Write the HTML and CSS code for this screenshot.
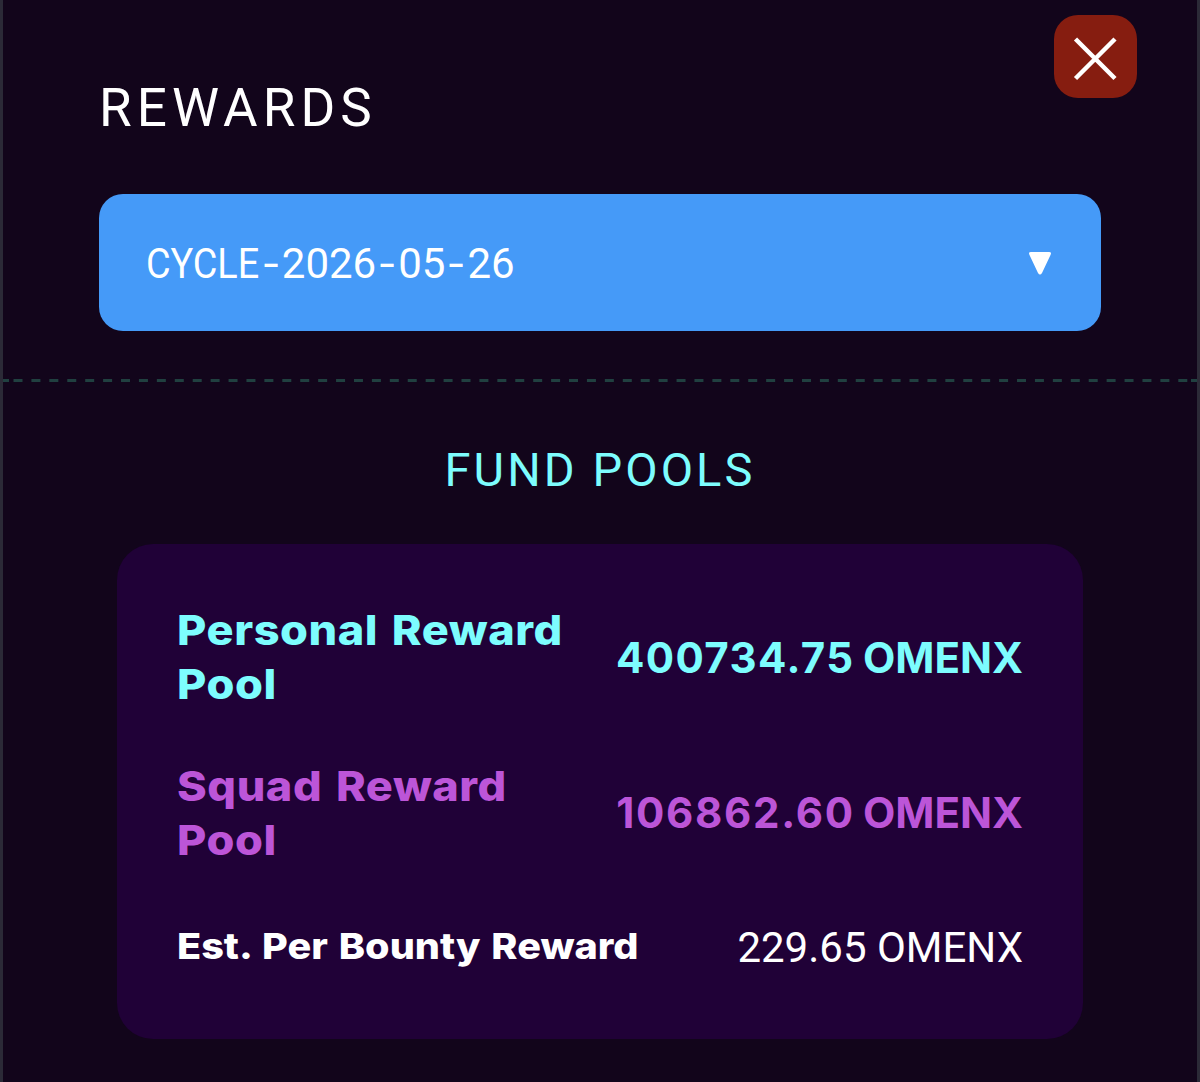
FILE: index.html
```
<!DOCTYPE html>
<html lang="en">
<head>
    <meta charset="UTF-8">
    <meta name="viewport" content="width=device-width, initial-scale=1.0">
    <title>Rewards</title>
    <link rel="stylesheet" href="styles.css">
</head>
<body>
    <div class="panel">
        <button class="close-btn" aria-label="Close">
            <svg width="83" height="83" viewBox="0 0 83 83">
                <path d="M21.500 24 L61 63.500 M61 24 L21.500 63.500" stroke="#fff" stroke-width="4.500" fill="none"/>
            </svg>
        </button>
        <div class="panel-header">
            <h1>REWARDS</h1>
            <div class="cycle-select">
                <span class="cycle-name"><span class="cycle-word">CYCLE</span><span class="dash">-</span>2026<span class="dash">-</span>05<span class="dash">-</span>26</span>
                <svg class="arrow" width="24" height="24" viewBox="0 0 24 24">
                    <path d="M3 1 H21 Q24 1 22.500 4 L14 22 Q12 25 10 22 L1.500 4 Q0 1 3 1 Z" fill="#fff"/>
                </svg>
            </div>
        </div>
        <svg class="divider" width="1194" height="3" viewBox="0 0 1194 3">
            <path d="M0 1.500 H6 M1188 1.500 H1194" stroke="#204040" stroke-width="3"/>
            <path d="M10.500 1.500 H1185" stroke="#204040" stroke-width="3" stroke-dasharray="9 8.920"/>
        </svg>
        <div class="panel-body">
            <h2>FUND POOLS</h2>
            <div class="pools">
                <div class="pool-row personal">
                    <div class="pool-label">Personal Reward<br>Pool</div>
                    <div class="pool-value"><span class="amount">400734.75</span> OMENX</div>
                </div>
                <div class="pool-row squad">
                    <div class="pool-label">Squad Reward<br>Pool</div>
                    <div class="pool-value"><span class="amount">106862.60</span> OMENX</div>
                </div>
                <div class="pool-row bounty">
                    <div class="pool-label">Est. Per Bounty Reward</div>
                    <div class="pool-value">229.65 OMENX</div>
                </div>
            </div>
        </div>
    </div>
</body>
</html>
```
FILE: styles.css
```
* {
    box-sizing: border-box;
}

body {
    margin: 0;
    background-color: #12051b;
    color: white;
    font-family: "Roboto", sans-serif;
}

.panel {
    position: relative;
    height: 1082px;
    border-left: 3px solid #2b2a37;
    border-right: 3px solid #2b2a37;
    overflow: hidden;
}

.close-btn {
    position: absolute;
    top: 15px;
    right: 60px;
    width: 83px;
    height: 83px;
    padding: 0;
    border: none;
    border-radius: 24px;
    background-color: #861d10;
}

.close-btn svg {
    display: block;
}

.panel-header {
    height: 379px;
    padding: 72px 96px 0;
}

h1, h2 {
    margin: 0;
    font-weight: 400;
}

h1 {
    height: 122px;
    font-size: 53px;
    line-height: 72px;
    letter-spacing: 5.1px;
}

.cycle-select {
    display: flex;
    justify-content: space-between;
    align-items: center;
    height: 137px;
    padding: 0 49px 0 47px;
    border-radius: 24px;
    background-color: #459af8;
    font-size: 42px;
}

.cycle-name {
    padding-top: 2px;
}

.cycle-word {
    display: inline-block;
    margin-right: -12px;
    transform: scaleX(0.9);
    transform-origin: left;
}

.dash {
    display: inline-block;
    width: 22px;
    text-align: center;
    transform: scaleX(1.3);
}

.divider {
    display: block;
}

.panel-body {
    padding: 53px 114px 0;
}

h2 {
    height: 109px;
    color: #7dfdfe;
    font-size: 47px;
    line-height: 70px;
    letter-spacing: 3.1px;
    text-align: center;
}

.pools {
    height: 495px;
    padding: 59px 60px;
    border-radius: 36px;
    background-color: #200137;
}

.pool-row {
    display: flex;
    justify-content: space-between;
    align-items: center;
    height: 108px;
    margin-bottom: 47px;
    white-space: nowrap;
}

.pool-label {
    font-family: "Inter", sans-serif;
    font-size: 41px;
    font-weight: 800;
    line-height: 54px;
    letter-spacing: 0.5px;
    word-spacing: 3px;
    transform: scaleX(1.1);
    transform-origin: left;
}

.pool-value {
    font-family: "Inter", sans-serif;
    font-size: 42px;
    font-weight: 700;
}

.amount {
    margin-right: -1.4px;
    letter-spacing: 1.4px;
}

.personal {
    margin-bottom: 48px;
    color: #7dfdfe;
}

.squad {
    margin-bottom: 46px;
    color: #bc55d8;
}

.squad .pool-value {
    padding-bottom: 2px;
}

.squad .amount {
    margin-right: -1.7px;
    letter-spacing: 1.7px;
}

.bounty {
    height: 67px;
}

.bounty .pool-label {
    padding-bottom: 1px;
    font-size: 36px;
    letter-spacing: 0;
    word-spacing: 2px;
}

.bounty .pool-value {
    padding-top: 1px;
    font-family: "Roboto", sans-serif;
    font-weight: 400;
}
```
